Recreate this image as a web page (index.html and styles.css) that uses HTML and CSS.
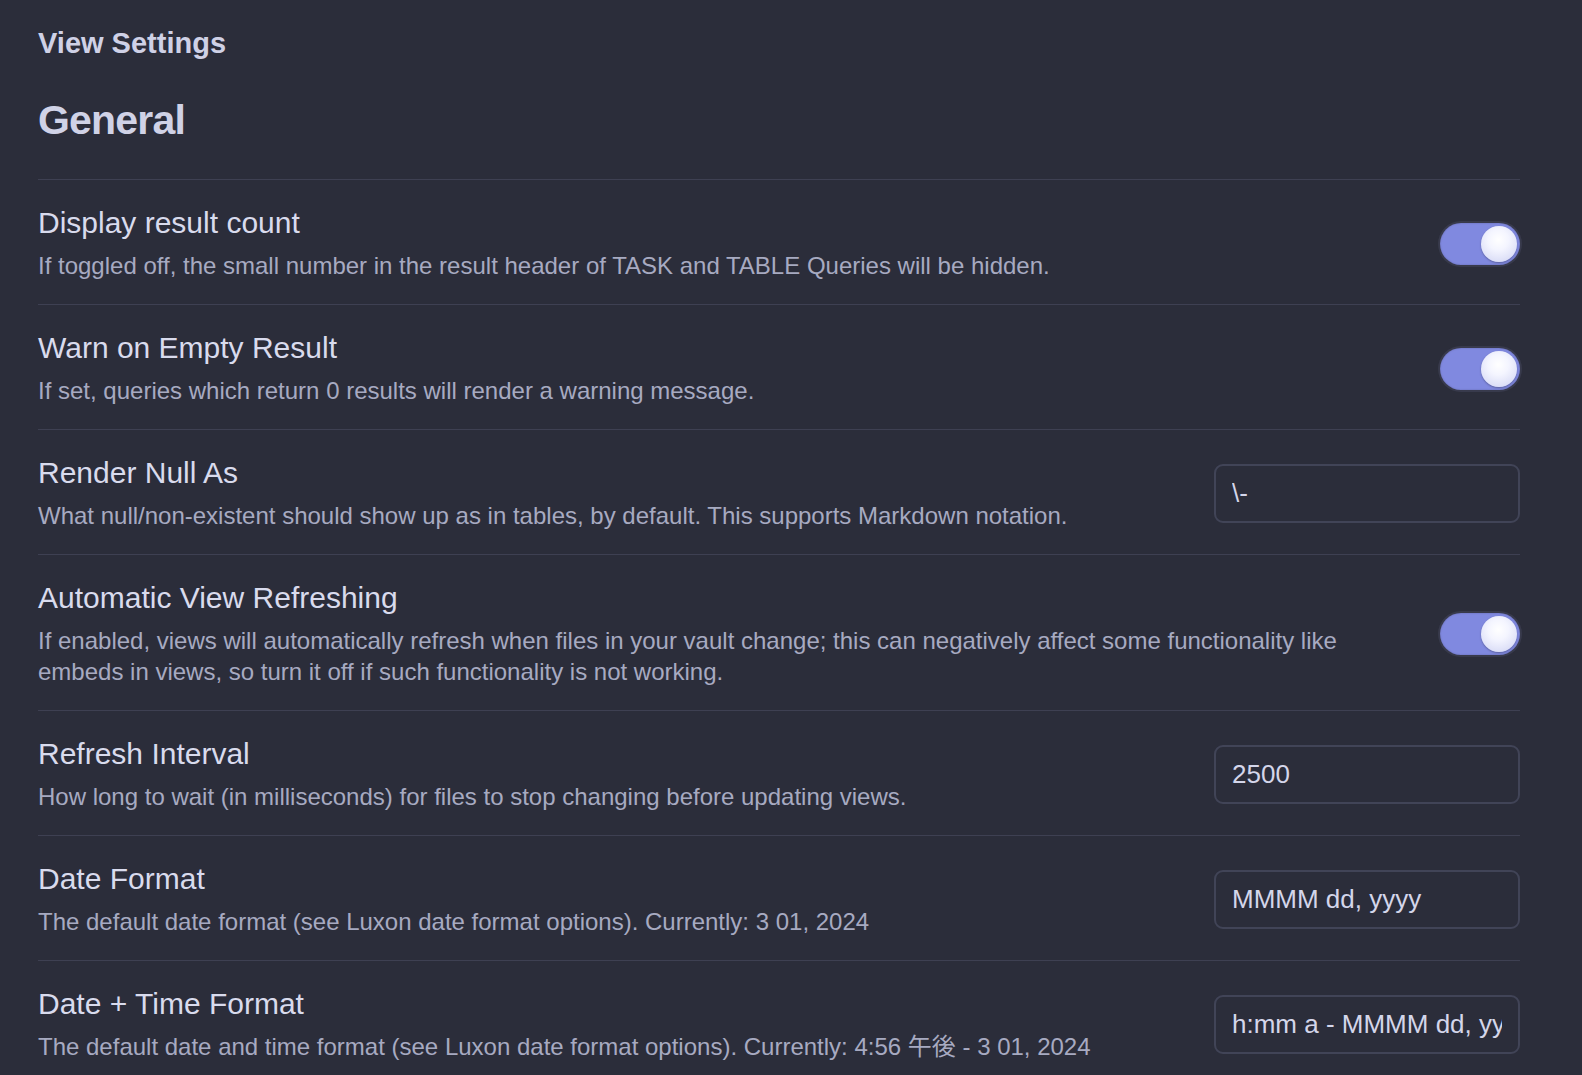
FILE: index.html
```html
<!DOCTYPE html>
<html lang="en">
<head>
<meta charset="utf-8">
<title>View Settings</title>
<link rel="stylesheet" href="styles.css">
</head>
<body>
<div class="page">
  <h3 class="section-title">View Settings</h3>
  <h2 class="group-title">General</h2>

  <div class="setting">
    <div class="info">
      <div class="name">Display result count</div>
      <div class="desc">If toggled off, the small number in the result header of TASK and TABLE Queries will be hidden.</div>
    </div>
    <div class="control"><div class="toggle on"><div class="knob"></div></div></div>
  </div>

  <div class="setting">
    <div class="info">
      <div class="name">Warn on Empty Result</div>
      <div class="desc">If set, queries which return 0 results will render a warning message.</div>
    </div>
    <div class="control"><div class="toggle on"><div class="knob"></div></div></div>
  </div>

  <div class="setting">
    <div class="info">
      <div class="name">Render Null As</div>
      <div class="desc">What null/non-existent should show up as in tables, by default. This supports Markdown notation.</div>
    </div>
    <div class="control"><input class="text-input" type="text" value="\-"></div>
  </div>

  <div class="setting">
    <div class="info">
      <div class="name">Automatic View Refreshing</div>
      <div class="desc">If enabled, views will automatically refresh when files in your vault change; this can negatively affect some functionality like embeds in views, so turn it off if such functionality is not working.</div>
    </div>
    <div class="control"><div class="toggle on"><div class="knob"></div></div></div>
  </div>

  <div class="setting">
    <div class="info">
      <div class="name">Refresh Interval</div>
      <div class="desc">How long to wait (in milliseconds) for files to stop changing before updating views.</div>
    </div>
    <div class="control"><input class="text-input" type="text" value="2500"></div>
  </div>

  <div class="setting">
    <div class="info">
      <div class="name">Date Format</div>
      <div class="desc">The default date format (see Luxon date format options). Currently: 3 01, 2024</div>
    </div>
    <div class="control"><input class="text-input" type="text" value="MMMM dd, yyyy"></div>
  </div>

  <div class="setting">
    <div class="info">
      <div class="name">Date + Time Format</div>
      <div class="desc">The default date and time format (see Luxon date format options). Currently: 4:56 午後 - 3 01, 2024</div>
    </div>
    <div class="control"><input class="text-input" type="text" value="h:mm a - MMMM dd, yyyy"></div>
  </div>
</div>
</body>
</html>
```

FILE: styles.css
```css
html, body {
  margin: 0;
  padding: 0;
  background: #2b2d3a;
  overflow: hidden;
}

body {
  font-family: "Liberation Sans", Arial, "Noto Sans CJK JP", sans-serif;
  color: #d6d8ea;
}

.page {
  padding: 25px 62px 0 38px;
}

.section-title {
  margin: 0;
  font-size: 29px;
  line-height: 36px;
  font-weight: 700;
  color: #cfd1e6;
}

.group-title {
  margin: 34px 0 34px 0;
  font-size: 41px;
  line-height: 50px;
  font-weight: 700;
  letter-spacing: -0.02em;
  color: #d0d2e6;
}

.setting {
  display: flex;
  align-items: center;
  border-top: 1px solid #3e4052;
  padding: 26px 0 23px 0;
}

.info {
  flex: 1 1 auto;
  min-width: 0;
  margin-right: 28px;
}

.name {
  font-size: 30px;
  line-height: 34px;
  color: #d9dbed;
}

.desc {
  margin-top: 10px;
  font-size: 24px;
  line-height: 31px;
  color: #a7aac1;
}

.control {
  flex: 0 0 auto;
  display: flex;
  justify-content: flex-end;
  align-items: center;
}

.toggle {
  width: 80px;
  height: 42px;
  box-sizing: border-box;
  border-radius: 21px;
  background: #8089e0;
  box-shadow: 0 0 0 2px #383a4c, inset 0 0 2px rgba(0, 0, 0, 0.25);
  display: flex;
  align-items: center;
  justify-content: flex-end;
  padding: 0 3px;
}

.knob {
  width: 36px;
  height: 36px;
  border-radius: 50%;
  background: radial-gradient(circle at 48% 38%, #ffffff 0%, #f4f5ff 35%, #d9dcf6 80%, #c9ccef 100%);
  box-shadow: 0 1px 2px rgba(0, 0, 0, 0.3);
}

.text-input {
  width: 306px;
  height: 59px;
  box-sizing: border-box;
  border: 2px solid #414457;
  border-radius: 9px;
  background: #2b2d3a;
  color: #d4d6ea;
  font-family: "Liberation Sans", Arial, sans-serif;
  font-size: 26px;
  padding: 0 16px;
  outline: none;
}
```
